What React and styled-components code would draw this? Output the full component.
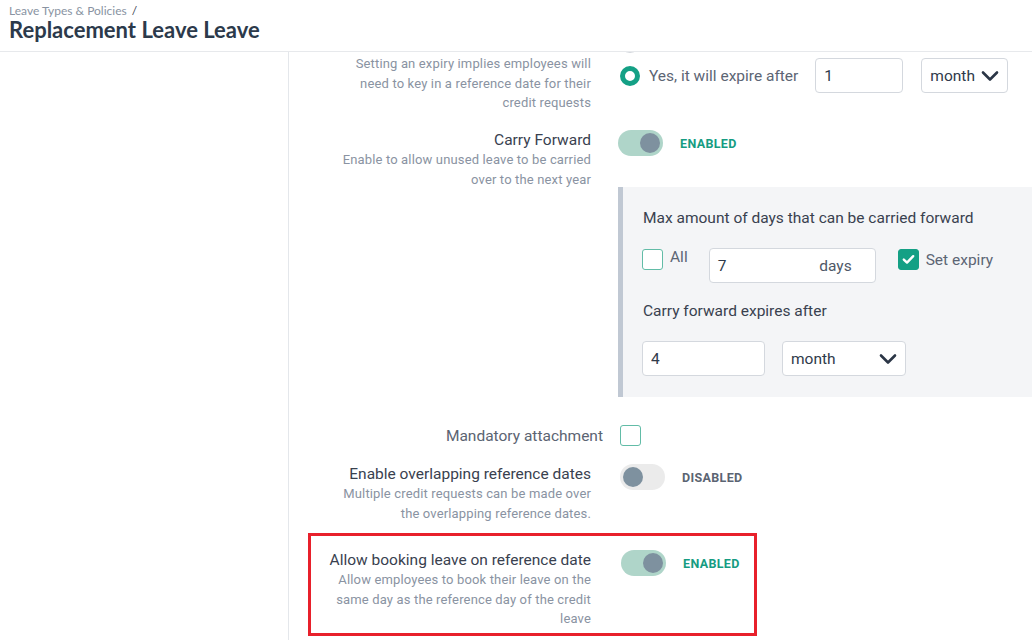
import styled, { createGlobalStyle } from 'styled-components';

const GlobalStyle = createGlobalStyle`
  * { box-sizing: border-box; }
  html, body { margin: 0; padding: 0; background: #fff; }
  body { font-family: Roboto, "Noto Sans", Arial, sans-serif; }
  #root { width: 1032px; height: 640px; overflow: hidden; }
`;

function Chevron() {
  return (
    <svg width="18" height="12" viewBox="0 0 18 12">
      <polyline points="2,2.5 9,9.5 16,2.5" fill="none" stroke="#2b3646" strokeWidth="2.6" strokeLinecap="round" strokeLinejoin="round" />
    </svg>
  );
}

function Check() {
  return (
    <svg width="13" height="11" viewBox="0 0 13 11">
      <polyline points="1.8,5.6 5,8.6 11.2,2.2" fill="none" stroke="#fff" strokeWidth="2.4" strokeLinecap="round" strokeLinejoin="round" />
    </svg>
  );
}

function Toggle({ on }) {
  return (
    <ToggleRow>
      <Switch $on={on}>
        <Knob $on={on} />
      </Switch>
      <Status $on={on}>{on ? 'ENABLED' : 'DISABLED'}</Status>
    </ToggleRow>
  );
}

export default function App() {
  return (
    <>
      <GlobalStyle />
      <Page>
        <Header>
          <Breadcrumb>Leave Types &amp; Policies <Slash>/</Slash></Breadcrumb>
          <Title>Replacement Leave Leave</Title>
        </Header>
        <Body>
          <Sidebar />
          <Main>
            <Content>
              <SettingRow>
                <LabelCell>
                  <Description $top={21}>
                    Setting an expiry implies employees will need to key in a reference date for their credit requests
                  </Description>
                </LabelCell>
                <Controls>
                  <RadioRow $short>
                    <Radio />
                  </RadioRow>
                  <RadioRow>
                    <Radio $checked />
                    <RadioText>Yes, it will expire after</RadioText>
                    <Field $width={88} defaultValue="1" />
                    <SelectBox $width={87}>
                      month
                      <Chevron />
                    </SelectBox>
                  </RadioRow>
                </Controls>
              </SettingRow>

              <SettingRow $space={17.5}>
                <LabelCell>
                  <Label>Carry Forward</Label>
                  <Description>Enable to allow unused leave to be carried over to the next year</Description>
                </LabelCell>
                <Controls $shift={-2}>
                  <Toggle on />
                  <Panel>
                    <PanelTitle>Max amount of days that can be carried forward</PanelTitle>
                    <PanelRow $top>
                      <CheckOption>
                        <CheckBox />
                        <CheckText $raise>All</CheckText>
                      </CheckOption>
                      <DaysBox>
                        <span>7</span>
                        <Unit>days</Unit>
                      </DaysBox>
                      <CheckOption>
                        <CheckBox $checked>
                          <Check />
                        </CheckBox>
                        <CheckText>Set expiry</CheckText>
                      </CheckOption>
                    </PanelRow>
                    <PanelTitle>Carry forward expires after</PanelTitle>
                    <PanelRow $gap={17}>
                      <Field $width={123} defaultValue="4" />
                      <SelectBox $width={124}>
                        month
                        <Chevron />
                      </SelectBox>
                    </PanelRow>
                  </Panel>
                </Controls>
              </SettingRow>

              <SettingRow $space={28} $center>
                <LabelCell $stretch={12}>
                  <Label $muted>Mandatory attachment</Label>
                </LabelCell>
                <Controls>
                  <CheckBox />
                </Controls>
              </SettingRow>

              <SettingRow $space={18}>
                <LabelCell>
                  <Label>Enable overlapping reference dates</Label>
                  <Description>Multiple credit requests can be made over the overlapping reference dates.</Description>
                </LabelCell>
                <Controls>
                  <Toggle on={false} />
                </Controls>
              </SettingRow>

              <Highlight>
                <SettingRow $label={280} $gutter={30}>
                  <LabelCell>
                    <Label>Allow booking leave on reference date</Label>
                    <Description>
                      Allow employees to book their leave on the same day as the reference day of the credit leave
                    </Description>
                  </LabelCell>
                  <Controls>
                    <Toggle on />
                  </Controls>
                </SettingRow>
              </Highlight>
            </Content>
          </Main>
        </Body>
      </Page>
    </>
  );
}

const Page = styled.div`
  display: flex;
  flex-direction: column;
  width: 1032px;
  height: 640px;
`;

const Header = styled.header`
  height: 52px;
  flex-shrink: 0;
  padding: 4px 9px 0;
  border-bottom: 1px solid #e7e9ec;
  font-family: Lato, Roboto, sans-serif;
  background: #fff;
`;

const Breadcrumb = styled.div`
  font-size: 12px;
  line-height: 14px;
  color: #8993a2;
`;

const Slash = styled.span`
  color: #3a4454;
  margin-left: 2px;
`;

const Title = styled.h1`
  margin: 0;
  font-size: 22px;
  line-height: 24px;
  font-weight: 700;
  color: #2c3a4b;
`;

const Body = styled.div`
  display: flex;
  flex: 1;
  min-height: 0;
`;

const Sidebar = styled.aside`
  width: 289px;
  flex-shrink: 0;
  border-right: 1px solid #e4e7eb;
`;

const Main = styled.main`
  flex: 1;
  overflow: hidden;
`;

const Content = styled.div`
  display: flex;
  flex-direction: column;
  margin-top: -19px;
`;

const SettingRow = styled.div`
  display: grid;
  grid-template-columns: ${p => p.$label || 302}px 1fr;
  column-gap: ${p => p.$gutter || 29}px;
  align-items: ${p => (p.$center ? 'center' : 'start')};
  margin-top: ${p => p.$space || 0}px;
`;

const LabelCell = styled.div`
  display: flex;
  flex-direction: column;
  align-items: flex-end;
  text-align: right;
  margin-right: ${p => -(p.$stretch || 0)}px;
`;

const Label = styled.div`
  font-size: 15.5px;
  line-height: 20px;
  color: ${p => (p.$muted ? '#5b6472' : '#39414f')};
`;

const Description = styled.div`
  max-width: 259px;
  margin-top: ${p => p.$top || 0}px;
  font-size: 13px;
  line-height: 19.5px;
  letter-spacing: 0.15px;
  color: #8a93a2;
`;

const Controls = styled.div`
  display: flex;
  flex-direction: column;
  align-items: flex-start;
  margin-left: ${p => p.$shift || 0}px;
`;

const RadioRow = styled.div`
  display: flex;
  align-items: center;
  height: ${p => (p.$short ? 20 : 35)}px;
  margin-top: ${p => (p.$short ? 0 : 5)}px;
`;

const Radio = styled.span`
  width: 20px;
  height: 20px;
  flex-shrink: 0;
  border-radius: 50%;
  background: #fff;
  border: ${p => (p.$checked ? '5px solid #14a085' : '1.5px solid #d3d7dc')};
`;

const RadioText = styled.span`
  margin: 0 17px 0 9px;
  font-size: 15.5px;
  color: #5c6574;
`;

const Field = styled.input.attrs({ readOnly: true })`
  width: ${p => p.$width}px;
  height: 35px;
  padding: 0 8px;
  border: 1px solid #d4d8de;
  border-radius: 4px;
  background: #fff;
  font-family: Roboto, sans-serif;
  font-size: 15.5px;
  color: #2f3a4a;
  outline: none;
  margin-right: 18px;
`;

const SelectBox = styled.div`
  width: ${p => p.$width}px;
  height: 35px;
  padding: 0 8px;
  display: flex;
  align-items: center;
  justify-content: space-between;
  border: 1px solid #d4d8de;
  border-radius: 4px;
  background: #fff;
  font-size: 15.5px;
  color: #2f3a4a;
`;

const ToggleRow = styled.div`
  display: flex;
  align-items: center;
  gap: 17px;
  height: 26px;
`;

const Switch = styled.span`
  display: flex;
  align-items: center;
  justify-content: ${p => (p.$on ? 'flex-end' : 'flex-start')};
  width: 45px;
  height: 26px;
  padding: 0 3px;
  border-radius: 13px;
  background: ${p => (p.$on ? '#afd5c9' : '#ebebeb')};
`;

const Knob = styled.span`
  width: 20px;
  height: 20px;
  border-radius: 50%;
  background: #7e919f;
`;

const Status = styled.span`
  font-size: 12.5px;
  font-weight: 700;
  letter-spacing: 0.35px;
  color: ${p => (p.$on ? '#169c82' : '#5b6472')};
`;

const Panel = styled.div`
  margin-top: 31px;
  width: 420px;
  padding: 21px 0 21px 20px;
  background: #f4f5f7;
  border-left: 5px solid #c0c8d3;
`;

const PanelTitle = styled.div`
  font-size: 15.5px;
  line-height: 20px;
  color: #39414f;
`;

const PanelRow = styled.div`
  display: flex;
  align-items: flex-start;
  gap: ${p => p.$gap || 0}px;
  margin: 20px 0 ${p => (p.$top ? 18 : 0)}px -1px;
  & > input { margin-right: 0; }
`;

const CheckOption = styled.label`
  display: flex;
  align-items: flex-start;
  gap: 7px;
  margin-top: 1px;
  margin-right: 22px;
  &:first-child { margin-right: 21px; }
`;

const CheckBox = styled.span`
  width: 21px;
  height: 21px;
  flex-shrink: 0;
  display: flex;
  align-items: center;
  justify-content: center;
  border-radius: 3px;
  background: ${p => (p.$checked ? '#14a085' : '#fff')};
  border: 1.5px solid ${p => (p.$checked ? '#14a085' : '#62bca7')};
`;

const CheckText = styled.span`
  font-size: 15.5px;
  line-height: 20px;
  color: #5c6574;
  margin-top: ${p => (p.$raise ? -2 : 1)}px;
`;

const DaysBox = styled.div`
  width: 167px;
  height: 35px;
  margin-right: 22px;
  padding: 0 8px;
  display: flex;
  align-items: center;
  border: 1px solid #d4d8de;
  border-radius: 4px;
  background: #fff;
  font-size: 15.5px;
  color: #2f3a4a;
`;

const Unit = styled.span`
  margin-left: auto;
  margin-right: 15px;
  color: #4f5867;
`;

const Highlight = styled.div`
  margin: 10px 0 0 19px;
  width: 449px;
  padding: 14px 0 4.5px;
  border: 3px solid #e8202b;
`;
